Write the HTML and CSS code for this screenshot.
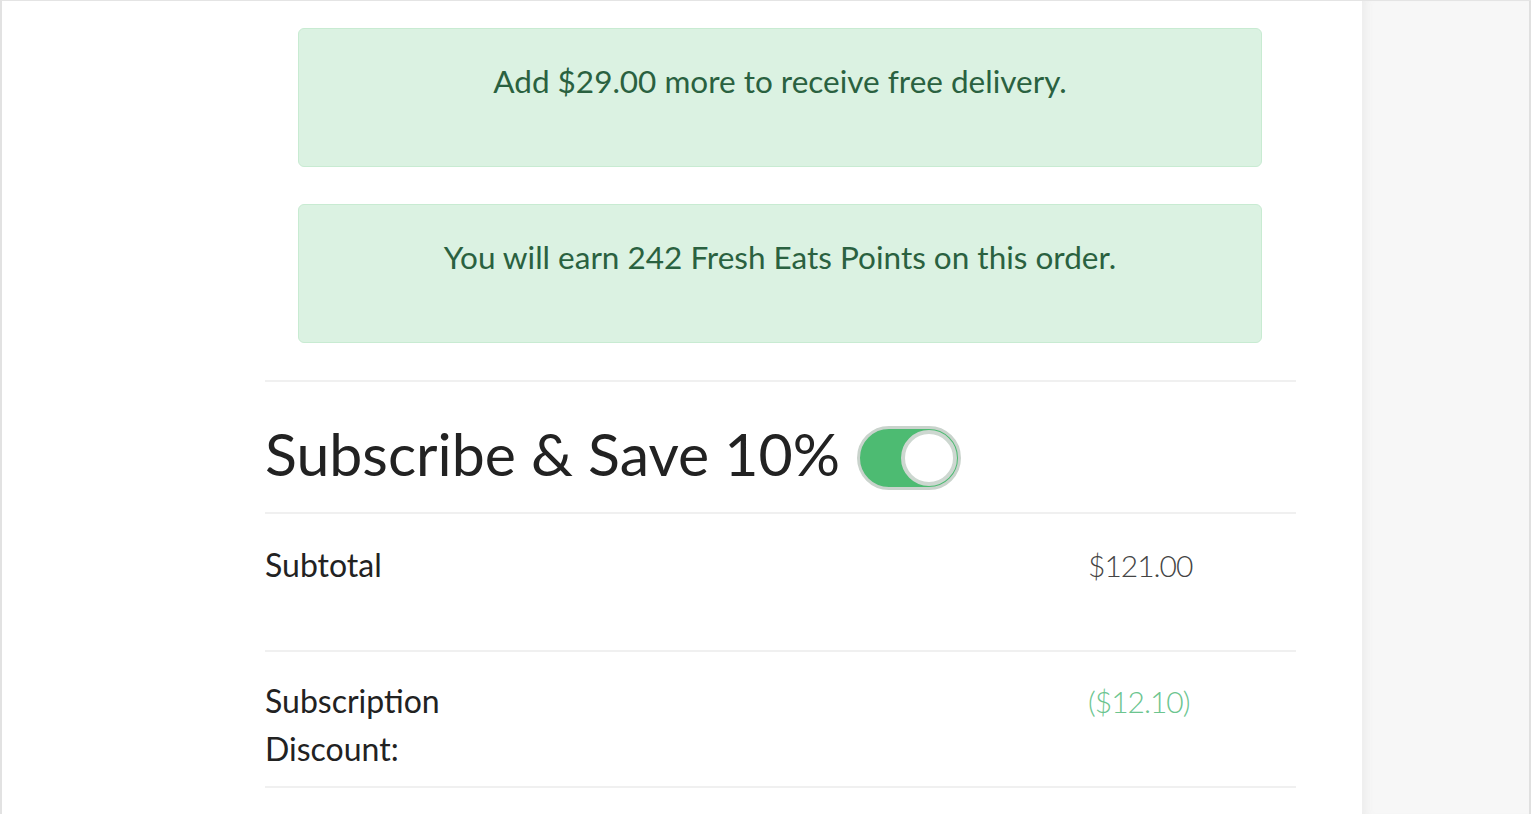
FILE: index.html
```html
<!DOCTYPE html>
<html lang="en">
<head>
<meta charset="utf-8">
<title>Cart summary</title>
<link rel="stylesheet" href="styles.css">
</head>
<body>
<div class="frame">
  <main class="main">
    <div class="content">
      <div class="alerts">
        <div class="alert"><p>Add $29.00 more to receive free delivery.</p></div>
        <div class="alert"><p>You will earn 242 Fresh Eats Points on this order.</p></div>
      </div>
      <div class="subscribe">
        <h2>Subscribe &amp; Save 10%</h2>
        <span class="toggle" role="switch" aria-checked="true"><span class="knob"></span></span>
      </div>
      <div class="row first">
        <div class="label">Subtotal</div>
        <div class="value">$121.00</div>
      </div>
      <div class="row second">
        <div class="label">Subscription<br>Discount:</div>
        <div class="value discount">($12.10)</div>
      </div>
    </div>
  </main>
  <aside class="side"></aside>
</div>
</body>
</html>
```
FILE: styles.css
```css
html, body {
  margin: 0;
  padding: 0;
  height: 100%;
  background: #fff;
}
body {
  font-family: Lato, "Open Sans", sans-serif;
  color: #222;
  overflow: hidden;
}
.frame {
  display: flex;
  height: 814px;
  border-top: 1px solid #e4e4e4;
  border-left: 2px solid #e2e2e2;
  box-sizing: border-box;
}
.main {
  flex: 0 0 1360px;
  background: #fff;
}
.side {
  flex: 1;
  background: #f7f7f7;
  border-right: 2px solid #e0e0e0;
  box-shadow: inset 10px 0 8px -6px #ececec;
}
.content {
  margin-left: 263px;
  width: 1031px;
}
.alerts {
  padding: 27px 34px 37px 33px;
  display: flex;
  flex-direction: column;
  gap: 37px;
}
.alert {
  height: 139px;
  box-sizing: border-box;
  background: #dbf2e2;
  border: 1px solid #c8ebd2;
  border-radius: 6px;
  color: #2a6140;
  text-align: center;
  padding-top: 32px;
}
.alert p {
  margin: 0;
  font-size: 31.5px;
  line-height: 40px;
}
.subscribe {
  border-top: 2px solid #f0f0f0;
  border-bottom: 2px solid #f0f0f0;
  height: 134px;
  box-sizing: border-box;
  display: flex;
  align-items: flex-start;
  gap: 17px;
  padding-top: 37px;
}
.subscribe h2 {
  margin: 0;
  font-weight: 400;
  font-size: 59px;
  line-height: 70px;
  color: #222;
}
.toggle {
  position: relative;
  width: 104px;
  height: 64px;
  box-sizing: border-box;
  border-radius: 32px;
  background: #4dbb72;
  border: 3px solid #c9d3cc;
  flex: none;
  margin-top: 7px;
}
.knob {
  position: absolute;
  right: 1px;
  top: 1px;
  width: 56px;
  height: 56px;
  box-sizing: border-box;
  border-radius: 50%;
  background: #fff;
  border: 4px solid #cdd7d0;
}
.row {
  display: grid;
  grid-template-columns: 823px 1fr;
  border-bottom: 2px solid #f0f0f0;
  padding-top: 27px;
  height: 136px;
  box-sizing: border-box;
  font-size: 32px;
  line-height: 48px;
}
.row.first {
  height: 138px;
}
.row.second {
  padding-top: 25px;
}
.label {
  color: #222;
}
.value {
  color: #444;
  font-weight: 300;
  font-size: 30px;
  letter-spacing: -1px;
}
.discount {
  color: #6cc58f;
}
```
